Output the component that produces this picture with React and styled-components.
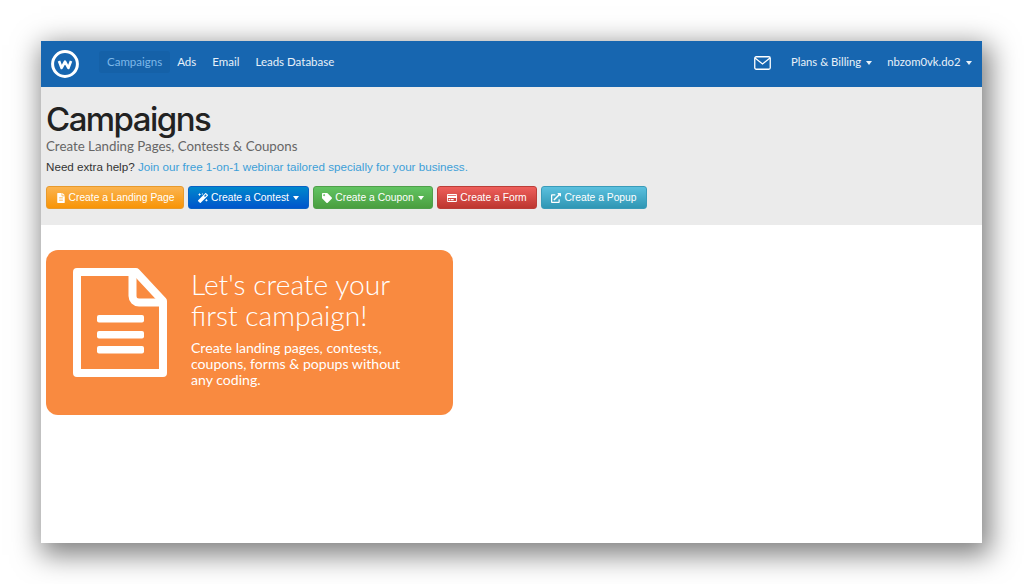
import React from 'react';
import styled, { createGlobalStyle } from 'styled-components';
import { FaFileAlt, FaMagic, FaTag, FaRegCreditCard, FaExternalLinkAlt } from 'react-icons/fa';

const GlobalStyle = createGlobalStyle`
  html, body {
    margin: 0;
    height: 100%;
    background: #fff;
    overflow: hidden;
  }
  * { box-sizing: border-box; }
`;

const Page = styled.div`
  width: 1024px;
  height: 584px;
  padding: 41px 42px 41px 41px;
  background: #fff;
`;

const Window = styled.div`
  height: 502px;
  background: #fff;
  box-shadow: 4px 8px 26px 4px rgba(0, 0, 0, 0.5);
  display: flex;
  flex-direction: column;
`;

const Navbar = styled.nav`
  height: 46px;
  flex: none;
  background: #1766b0;
  display: flex;
  align-items: center;
  padding: 0 3px 1px 10px;
  font-family: "Lato", "Liberation Sans", sans-serif;
  font-size: 11.5px;
  color: #e8f1f9;
`;

const Logo = styled.svg`
  width: 28px;
  height: 28px;
  flex: none;
  margin-right: 20px;
`;

const NavLink = styled.a`
  display: block;
  padding: 4.5px 8px;
  margin-bottom: 4px;
  border-radius: 3px;
  white-space: nowrap;
  color: ${(p) => (p.$active ? '#7db8e8' : '#e8f1f9')};
  background: ${(p) => (p.$active ? '#1561a8' : 'transparent')};
  &:first-of-type { margin-right: ${(p) => (p.$active ? -1 : 0)}px; }
`;

const Spacer = styled.div`
  flex: 1;
`;

const RightNav = styled.div`
  display: flex;
  align-items: center;
  font-size: 11.3px;
`;

const MailIcon = styled.svg`
  width: 17px;
  height: 14px;
  margin: 0 13px 2px 0;
`;

const UserLink = styled(NavLink)`
  padding-left: 7.5px;
  padding-right: 7.5px;
`;

const Caret = styled.span`
  display: inline-block;
  width: 0;
  height: 0;
  margin-left: ${(p) => p.$left || 5}px;
  vertical-align: middle;
  border-top: 4px solid ${(p) => p.$color || '#e8f1f9'};
  border-left: 3.5px solid transparent;
  border-right: 3.5px solid transparent;
`;

const Header = styled.header`
  height: 138px;
  flex: none;
  background: #ebebeb;
  padding: 13px 5px 0;
`;

const Title = styled.h1`
  margin: 0;
  font-family: "Inter", "Liberation Sans", sans-serif;
  font-weight: 500;
  font-size: 33px;
  line-height: 38px;
  letter-spacing: -1.55px;
  color: #222;
`;

const Subtitle = styled.div`
  font-family: "Lato", "Liberation Sans", sans-serif;
  font-size: 13.3px;
  line-height: 16px;
  color: #666;
`;

const Help = styled.p`
  margin: 5px 0 0;
  font-family: "Liberation Sans", Arial, sans-serif;
  font-size: 11.65px;
  line-height: 16px;
  color: #333;
  a { color: #3d9fd8; }
`;

const ButtonRow = styled.div`
  display: flex;
  gap: 4px;
  margin-top: 11px;
`;

const Button = styled.button`
  height: 23px;
  width: ${(p) => p.$width}px;
  padding: 0;
  border: 1px solid ${(p) => p.$border};
  border-radius: 3px;
  background: linear-gradient(to bottom, ${(p) => p.$top}, ${(p) => p.$bottom});
  color: #fff;
  font-family: "Liberation Sans", Arial, sans-serif;
  font-size: 10.3px;
  white-space: nowrap;
  display: flex;
  align-items: center;
  justify-content: center;
  gap: 3px;
  svg { width: 10px; height: 10px; flex: none; }
`;

const Content = styled.main`
  padding: 25px 5px 0;
`;

const PromoCard = styled.div`
  width: 407px;
  height: 165px;
  border-radius: 12px;
  background: #f98a40;
  color: #fff;
  display: flex;
  padding: 18px 0 0 27px;
  font-family: "Lato", "Liberation Sans", sans-serif;
`;

const DocIcon = styled.svg`
  width: 95px;
  height: 110px;
  flex: none;
  margin-right: 23px;
`;

const PromoText = styled.div`
  width: 220px;
  padding-top: 1px;
`;

const PromoTitle = styled.h2`
  margin: 0;
  font-weight: 300;
  font-size: 28.2px;
  line-height: 31px;
  white-space: nowrap;
`;

const PromoBody = styled.p`
  margin: 9px 0 0;
  font-size: 14.1px;
  line-height: 16px;
  white-space: nowrap;
`;

const buttons = [
  { label: 'Create a Landing Page', Icon: FaFileAlt, width: 138, top: '#fbb450', bottom: '#f89406', border: '#e89a2c' },
  { label: 'Create a Contest', Icon: FaMagic, width: 121, top: '#0088cc', bottom: '#0055cc', border: '#0a62c4', caret: true },
  { label: 'Create a Coupon', Icon: FaTag, width: 120, top: '#62c462', bottom: '#4a9e3f', border: '#4f9f4a', caret: true },
  { label: 'Create a Form', Icon: FaRegCreditCard, width: 100, top: '#ee5f5b', bottom: '#bd362f', border: '#bb3e38' },
  { label: 'Create a Popup', Icon: FaExternalLinkAlt, width: 106, top: '#5bc0de', bottom: '#2f96b4', border: '#3a9bb9' },
];

const App = () => {
  return (
    <>
      <GlobalStyle />
      <Page>
        <Window>
          <Navbar>
            <Logo viewBox="0 0 28 28">
              <circle cx="14" cy="14" r="12.4" fill="none" stroke="#fff" strokeWidth="3" />
              <path d="M8 11l2.6 7 3.4-6.4 3.4 6.4 2.6-7" fill="none" stroke="#fff" strokeWidth="2.6" strokeLinejoin="round" />
            </Logo>
            <NavLink $active>Campaigns</NavLink>
            <NavLink>Ads</NavLink>
            <NavLink>Email</NavLink>
            <NavLink>Leads Database</NavLink>
            <Spacer />
            <RightNav>
              <MailIcon viewBox="0 0 17 14">
                <rect x="0.75" y="0.75" width="15.5" height="12.5" rx="1.5" fill="none" stroke="#fff" strokeWidth="1.3" />
                <path d="M1 2l7.5 6L16 2" fill="none" stroke="#fff" strokeWidth="1.3" />
              </MailIcon>
              <UserLink>Plans &amp; Billing<Caret /></UserLink>
              <UserLink>nbzom0vk.do2<Caret /></UserLink>
            </RightNav>
          </Navbar>
          <Header>
            <Title>Campaigns</Title>
            <Subtitle>Create Landing Pages, Contests &amp; Coupons</Subtitle>
            <Help>Need extra help? <a>Join our free 1-on-1 webinar tailored specially for your business.</a></Help>
            <ButtonRow>
              {buttons.map(({ label, Icon, caret, width, top, bottom, border }) => (
                <Button key={label} $width={width} $top={top} $bottom={bottom} $border={border}>
                  <Icon />
                  {label}
                  {caret && <Caret $left={1} $color="#fff" />}
                </Button>
              ))}
            </ButtonRow>
          </Header>
          <Content>
            <PromoCard>
              <DocIcon viewBox="0 0 95 110">
                <path d="M4 4h59l27 29v72H4z" fill="none" stroke="#fff" strokeWidth="8" strokeLinejoin="round" />
                <path d="M59.5 4v24a6.5 6.5 0 0 0 6.5 6.5h24" fill="none" stroke="#fff" strokeWidth="8" />
                <rect x="24" y="47" width="47" height="7.5" rx="2" fill="#fff" />
                <rect x="24" y="63" width="47" height="7.5" rx="2" fill="#fff" />
                <rect x="24" y="78" width="47" height="7.5" rx="2" fill="#fff" />
              </DocIcon>
              <PromoText>
                <PromoTitle>Let's create your<br />first campaign!</PromoTitle>
                <PromoBody>Create landing pages, contests,<br />coupons, forms &amp; popups without<br />any coding.</PromoBody>
              </PromoText>
            </PromoCard>
          </Content>
        </Window>
      </Page>
    </>
  );
};

export default App;
